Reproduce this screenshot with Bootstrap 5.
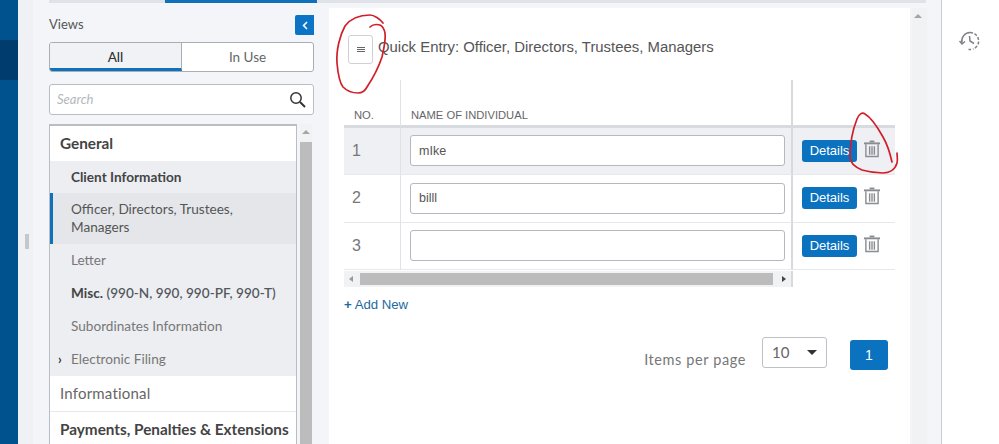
<!doctype html>
<html lang="en"><head><meta charset="utf-8"><title>Quick Entry</title>
<link rel="stylesheet" href="https://cdn.jsdelivr.net/npm/bootstrap@5.3.0/dist/css/bootstrap.min.css">
<style>
html,body{height:444px;overflow:hidden;background:#fff}
body{font-family:"Liberation Sans",Arial,sans-serif;color:#555;position:relative}
.shell{height:444px;width:999px}
.rail{width:18px;background:#00528f;padding-top:40px;flex:none}
.rail-band{height:40px;background:#003c6e}
.gutter{width:15px;background:#eff1f5;flex:none;position:relative}
.grip{width:4px;height:15px;background:#c4c7cc;position:absolute;left:7px;top:234px}
.workspace{width:909px;background:#f3f5f9;flex:none;border-right:1px solid #c9cedb;padding-left:16px}
.history{width:57px;flex:none;padding:28px 0 0 17px}
.toprule{height:3px;width:877px;background:#dfe2e8;position:relative;flex:none}
.toptab{position:absolute;left:116px;width:152px;top:0;height:3px;background:#0f71b9}
.views{width:265px;flex:none;font-family:Lato,sans-serif;margin-right:15px}
.views-head{height:35px;font-size:13px;color:#555}
.collapse-tab{width:19px;height:20px;background:#0b74c4;border-radius:2px 0 0 2px}
.seg{height:30px;border:1px solid #a9adb4;border-radius:3px;overflow:hidden;background:#fff;margin-bottom:12px}
.seg>div{flex:1 1 0;text-align:center;font-size:13.5px;line-height:28px;color:#666}
.seg .on{background:#f0f2f6;color:#333;border-right:1px solid #a9adb4;border-bottom:3px solid #0f71b9;font-weight:500}
.searchbox{height:31px;border:1px solid #b9bdc4;border-radius:3px;background:#fff;padding:0 7px;margin-bottom:9px}
.searchbox i{font-size:13px;color:#b4b7bc}
.treewrap{height:330px}
.tree{width:248px;background:#fff;border:1px solid #b9bdc4;border-bottom:0;border-top-width:2px;font-size:13.6px;flex:none}
.t-top{font-size:15px;padding-left:10px;color:#444}
.t-gen{height:35px;line-height:35px;font-weight:700;font-size:15.300px}
.t-sub{background:#eceef2;padding-left:21px;line-height:18px;padding-top:7px;padding-bottom:8px;height:33px;color:#777;position:relative}
.t-sub b{color:#444}
.t-sub.cur{height:51px;background:#e4e6ea;color:#555;border-left:3px solid #0f71b9;padding-left:18px;padding-right:40px;margin-top:-1px;padding-top:7px}
.caret-r{position:absolute;left:8px;top:7px;font-size:13px;color:#333;font-weight:700}
.t-inf{height:36px;line-height:34px;border-bottom:1px solid #e6e8ec;color:#666;letter-spacing:.2px}
.t-pay{height:36px;line-height:34px;font-weight:700;white-space:nowrap;font-size:15.300px}
.sb-v{width:12px;margin-left:3px;background:#f1f2f4;flex:none;padding-top:18px;position:relative}
.sb-v div{height:100%;background:#bcbcbc}
.arrow-up{width:0;height:0;border:4px solid transparent;border-top:0;border-bottom:4px solid #a5a5a5;position:absolute;left:2px;top:6px}
.sheet{width:581px;height:441px;background:#fff;flex:none;margin-top:5px;padding:27px 15px 0 15px;margin-left:0}
.sb-main{width:15px;margin-left:2px;background:#f1f2f4;flex:none;margin-top:5px;position:relative}
.menu-btn{width:25px;height:29px;border:1px solid #cfd1d5;border-radius:3px;background:#fff;flex:none;margin:0 5px 0 4px;padding:0;display:flex;flex-direction:column;gap:1px;align-items:center;justify-content:center}
.menu-btn span{width:8px;height:1px;background:#666}
.ttl{font-size:14.900px;color:#555;margin:0;font-weight:400;padding-top:4px}
.entry{display:grid;grid-template-columns:57px 392px 102px;grid-template-rows:47.5px 47.5px 47.5px 47.5px auto;margin-top:16px;width:551px}
.hd{border-bottom:3px solid #d7dade;font-size:11.200px;color:#666;padding-top:28px;line-height:14px}
.c1{padding-left:10px;border-right:1px solid #e0e2e6}
.c2{padding-left:10px;border-right:2px solid #d7d9dd}
.c3{padding-left:9px}
.cell{border-bottom:1px solid #e6e8ec;display:flex;align-items:center}
.cell.c2{padding-left:9px}
.cell.rowon{background:#eef0f3}
.cell.c1{font-size:16px;color:#777;padding-left:8px}
.fld{width:375px;height:31px;border:1px solid #b5b8be;border-radius:3px;padding:0 8px;font-size:12.5px;color:#555;font-family:inherit;background:#fff;outline:0}
.det{background:#0b72c0;color:#fff;border:0;border-radius:3px;width:55px;height:22px;font-size:13px;padding:0;line-height:22px}
.bin{width:16px;height:18px;margin-left:7px;margin-top:-4px;flex:none}
.hbar{grid-column:1/3;height:16px;background:#f1f2f4;border-right:2px solid #d7d9dd;display:flex;align-items:center;margin-top:1px;padding:0 5px}
.hbar div{flex:1;height:12px;background:#bcbcbc;margin:0 9px 0 7px}
.tri-l{width:0;height:0;border:3px solid transparent;border-left:0;border-right:4px solid #999}
.tri-r{width:0;height:0;border:3px solid transparent;border-right:0;border-left:4px solid #444}
.addnew{color:#1d6a9f;font-size:13.200px;margin-top:10px;line-height:16px;text-decoration:none;display:block}
.pager{margin-top:24px;width:544px}
.ipp{font-family:Lato,sans-serif;font-size:14.500px;color:#777;margin-right:16px;padding-top:12px;letter-spacing:.6px}
.selbox{width:65px;height:31px;border:1px solid #bdc0c5;border-radius:3px;font-family:Lato,sans-serif;font-size:15px;color:#666;padding:0 9px;margin-right:23px}
.caret-d{width:0;height:0;border:5px solid transparent;border-bottom:0;border-top:5px solid #333}
.pg{width:38px;height:30px;margin-top:3px;background:#0b72c0;color:#fff;border:0;border-radius:3px;font-size:14px;padding:0}
.ink{position:absolute;left:0;top:0;pointer-events:none}
</style></head>
<body>
<div class="shell d-flex">
  <div class="rail"><div class="rail-band"></div></div>
  <div class="gutter"><div class="grip"></div></div>
  <div class="workspace d-flex flex-column">
    <div class="toprule"><div class="toptab"></div></div>
    <div class="d-flex flex-grow-1">
      <div class="views">
        <div class="views-head d-flex justify-content-between align-items-start pt-2 mt-1">
          <span>Views</span>
          <div class="collapse-tab d-flex align-items-center justify-content-center"><svg width="6" height="9" viewBox="0 0 6 9"><path d="M5 1 1.600 4.500 5 8" fill="none" stroke="#fff" stroke-width="1.600"/></svg></div>
        </div>
        <div class="seg d-flex"><div class="on">All</div><div>In Use</div></div>
        <div class="searchbox d-flex align-items-center justify-content-between"><i>Search</i>
          <svg width="17" height="17" viewBox="0 0 17 17"><circle cx="7" cy="7" r="5.200" fill="none" stroke="#333" stroke-width="1.500"/><path d="m11 11 5 5" stroke="#333" stroke-width="2"/></svg></div>
        <div class="treewrap d-flex">
          <div class="tree">
            <div class="t-top t-gen">General</div>
            <div class="t-sub"><b>Client Information</b></div>
            <div class="t-sub cur">Officer, Directors, Trustees, Managers</div>
            <div class="t-sub">Letter</div>
            <div class="t-sub"><b>Misc.</b> <span class="text-body-secondary fw-semibold">(990-N, 990, 990-PF, 990-T)</span></div>
            <div class="t-sub">Subordinates Information</div>
            <div class="t-sub"><span class="caret-r">›</span>Electronic Filing</div>
            <div class="t-top t-inf">Informational</div>
            <div class="t-top t-pay">Payments, Penalties &amp; Extensions</div>
          </div>
          <div class="sb-v"><span class="arrow-up"></span><div></div></div>
        </div>
      </div>
      <div class="sheet">
        <div class="d-flex align-items-start">
          <button class="menu-btn" aria-label="menu"><span></span><span></span><span></span></button>
          <h1 class="ttl">Quick Entry: Officer, Directors, Trustees, Managers</h1>
        </div>
        <div class="entry">
          <div class="hd c1">NO.</div><div class="hd c2">NAME OF INDIVIDUAL</div><div class="hd"></div>
          <div class="cell rowon c1">1</div><div class="cell rowon c2"><input class="fld" value="mIke"></div>
          <div class="cell rowon c3"><button class="det">Details</button><svg class="bin" viewBox="0 0 17 18"><use href="#binicon"/></svg></div>
          <div class="cell c1">2</div><div class="cell c2"><input class="fld" value="billl"></div>
          <div class="cell c3"><button class="det">Details</button><svg class="bin" viewBox="0 0 17 18"><use href="#binicon"/></svg></div>
          <div class="cell c1">3</div><div class="cell c2"><input class="fld" value=""></div>
          <div class="cell c3"><button class="det">Details</button><svg class="bin" viewBox="0 0 17 18"><use href="#binicon"/></svg></div>
          <div class="hbar"><span class="tri-l"></span><div></div><span class="tri-r"></span></div>
        </div>
        <a class="addnew" href="#"><b>+</b> Add New</a>
        <div class="pager d-flex justify-content-end align-items-start">
          <span class="ipp">Items per page</span>
          <div class="selbox d-flex align-items-center justify-content-between"><span>10</span><span class="caret-d"></span></div>
          <button class="pg">1</button>
        </div>
      </div>
      <div class="sb-main"><span class="arrow-up"></span></div>
    </div>
  </div>
  <div class="history">
    <svg width="22" height="22" viewBox="0 0 22 22" fill="none" stroke="#808285" stroke-width="1.500"><path d="M3 13A8.500 8.500 0 0 1 11 2.500"/><path d="M11 2.500a8.500 8.500 0 0 1 3 16.500M12 19.500H9.500" stroke-dasharray="3 1.600"/><path d="m10.500 6 .5 5 4 2.500"/><path d="M0.500 11 3 14l3-2.500"/></svg>
  </div>
</div>
<svg width="0" height="0" class="position-absolute"><defs><g id="binicon" fill="none" stroke="#8a8d92"><path d="M0 3h17" stroke-width="2"/><path d="M6 1h5" stroke-width="2"/><path d="M2 4v13h13V4M6 6v9M8.500 6v9M11 6v9" stroke-width="1.500"/></g></defs></svg>
<svg class="ink" width="999" height="444" fill="none" stroke="#d11f2a" stroke-width="1.700" stroke-linecap="round">
  <path d="M383 23c-3-4-9-8-13-8-10 0-19 3-25 11-5 9-9 24-8 37 1 12 3 20 6 24 4 4 10 6 15 6 4 0 7-2 9-6 6-9 12-21 15-30 2-9 4-17 3-24-1-5-3-7-5-8-4-1-7-1-10 2"/>
  <path d="M892 162c-2-9-5-18-9-25-5-9-11-19-18-23-3-2-6 0-8 5-4 10-7 24-7 38 0 5 5 10 12 13 7 2 14 3 21 3 6 0 12-3 14-10 1-3 0-7 0-10"/>
</svg>
</body></html>
